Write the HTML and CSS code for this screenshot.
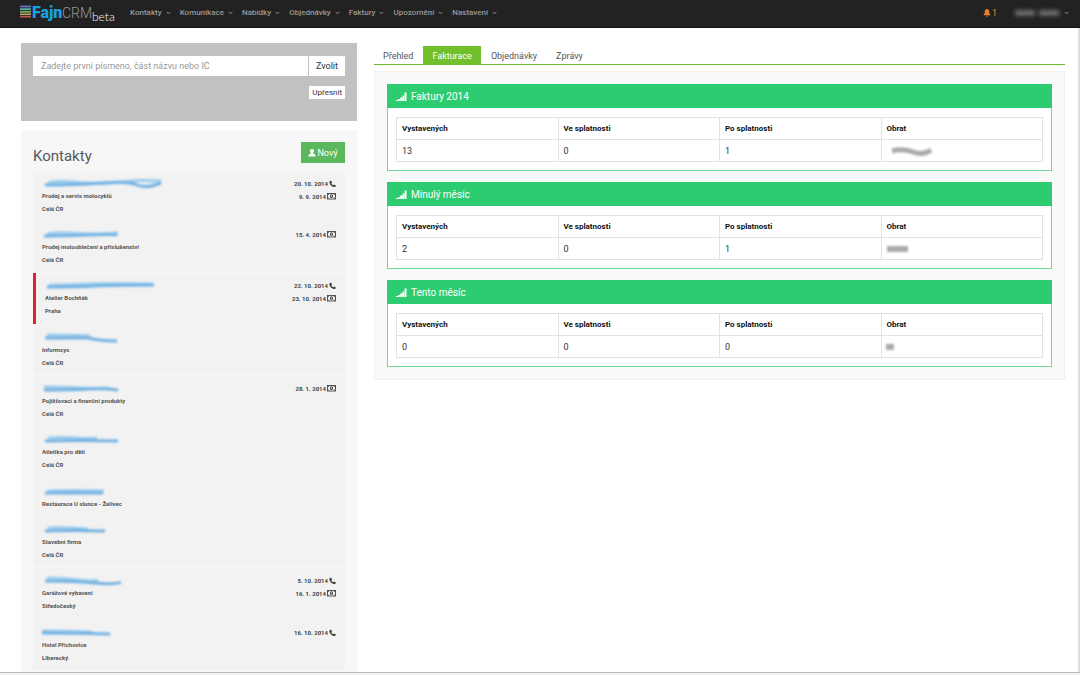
FILE: index.html
```html
<!DOCTYPE html>
<html lang="cs">
<head>
<meta charset="utf-8">
<title>FajnCRM – Fakturace</title>
<link rel="stylesheet" href="styles.css">
</head>
<body>
<svg class="defs" aria-hidden="true">
  <defs>
    <symbol id="chev" viewBox="0 0 6 4"><path d="M.8.6 3 2.9 5.2.6" fill="none" stroke="currentColor" stroke-width="1.1"/></symbol>
    <symbol id="phone" viewBox="0 0 8 8"><path d="M.6.8 2.3.1 3.5 2.4 2.6 3.3C3.1 4.3 3.8 5 4.8 5.4L5.7 4.5 7.9 5.7 7.4 7.2C5.3 8.4-.6 4.8.6.8Z" fill="currentColor"/></symbol>
    <symbol id="money" viewBox="0 0 9 7"><rect x=".5" y=".5" width="8" height="5.5" fill="none" stroke="currentColor" stroke-width=".9"/><ellipse cx="4.5" cy="3.2" rx="1.5" ry="1.9" fill="currentColor"/><path d="M4.5 2.2V4.4" stroke="#f3f3f3" stroke-width=".6"/><path d="M1 1h1.4L1 2.3zM8 1H6.6L8 2.3zM1 5.5h1.4L1 4.2zM8 5.5H6.6L8 4.2z" fill="currentColor"/></symbol>
    <symbol id="signal" viewBox="0 0 11 9"><path d="M0 8h1.9V9H0zM2.1 7H4V9H2.1zM4.2 5.4h2V9h-2zM6.4 3.4h1.9V9H6.4zM8.6 .5h1.9V9H8.6z" fill="currentColor"/></symbol>
  </defs>
</svg>
<div class="app">
  <header class="topbar">
    <a class="logo" href="#" aria-label="FajnCRM beta">
      <svg width="96" height="24" viewBox="0 0 96 24">
        <path d="M0 6.5h11" stroke="#5e79b5" stroke-width="1.8"/>
        <path d="M0 9.2h11" stroke="#58b3a6" stroke-width="1.8"/>
        <path d="M0 11.8h11" stroke="#77ad57" stroke-width="1.8"/>
        <path d="M0 14.3h11" stroke="#c3a668" stroke-width="1.6"/>
        <path d="M0 16.7h11" stroke="#b45a4e" stroke-width="1.6"/>
        <text class="logo-fajn" x="12" y="18">Fajn</text>
        <text class="logo-crm" x="42" y="18">CRM</text>
        <text class="logo-beta" x="72" y="21">beta</text>
      </svg>
    </a>
    <nav class="menu">
      <a href="#">Kontakty<svg><use href="#chev"/></svg></a>
      <a href="#">Komunikace<svg><use href="#chev"/></svg></a>
      <a href="#">Nabídky<svg><use href="#chev"/></svg></a>
      <a href="#">Objednávky<svg><use href="#chev"/></svg></a>
      <a href="#">Faktury<svg><use href="#chev"/></svg></a>
      <a href="#">Upozornění<svg><use href="#chev"/></svg></a>
      <a href="#">Nastavení<svg><use href="#chev"/></svg></a>
    </nav>
    <a class="bell" href="#"><svg width="8" height="8" viewBox="0 0 8 8"><path d="M4 0C5.8.3 6.3 1.6 6.3 3.2 6.3 4.8 7 5.4 7.8 6.3H.2C1 5.4 1.7 4.8 1.7 3.2 1.7 1.6 2.2.3 4 0ZM3 6.7h2C4.9 8.1 3.1 8.1 3 6.7Z" fill="currentColor"/></svg>1</a>
    <a class="user" href="#" aria-label="Uživatel">
      <svg class="name" width="46" height="10" viewBox="0 0 46 10"><path d="M1 5h20M25 5h20" stroke="#777" stroke-width="5"/></svg>
      <svg class="chev"><use href="#chev"/></svg>
    </a>
  </header>

  <main class="content">
    <aside class="side">
      <form class="search">
        <div class="search-row">
          <input type="text" aria-label="Hledat kontakt" placeholder="Zadejte první písmeno, část názvu nebo IČ">
          <button type="button">Zvolit</button>
        </div>
        <button class="refine" type="button">Upřesnit</button>
      </form>
      <section class="contacts">
        <div class="contacts-head">
          <h1>Kontakty</h1>
          <button type="button" class="new"><svg width="8" height="8" viewBox="0 0 8 8"><path d="M4 0C6.6 0 6.2 3.3 5 4.2 5.3 5 7.6 4.8 7.8 7.6H.2C.4 4.8 2.7 5 3 4.2 1.8 3.3 1.4 0 4 0Z" fill="currentColor"/></svg>Nový</button>
        </div>
        <ul class="list">
          <li>
            <div class="who"><svg class="smudge"><path class="a" d="M6 7Q16 4 32 6T66 7 90 5 119 5"/><path class="b" d="M3 9Q34 9 60 7T95 9 119 7"/></svg><span>Prodej a servis motocyklů</span><span>Celá ČR</span></div>
            <div class="dates"><span>20. 10. 2014<svg class="ph"><use href="#phone"/></svg></span><span>9. 9. 2014<svg class="mo"><use href="#money"/></svg></span></div>
          </li>
          <li>
            <div class="who"><svg class="smudge"><path class="a" d="M5 7Q14 5 28 6T52 7 76 6"/><path class="b" d="M2 9Q24 9 46 8T75 8"/></svg><span>Prodej motooblečení a příslušenství</span><span>Celá ČR</span></div>
            <div class="dates"><span>15. 4. 2014<svg class="mo"><use href="#money"/></svg></span></div>
          </li>
          <li class="flagged">
            <div class="who"><svg class="smudge"><path class="a" d="M4 7Q20 7 40 6T107 6"/><path class="b" d="M2 9Q30 9 50 8T109 7"/></svg><span>Atelier Bochňák</span><span>Praha</span></div>
            <div class="dates"><span>22. 10. 2014<svg class="ph"><use href="#phone"/></svg></span><span>23. 10. 2014<svg class="mo"><use href="#money"/></svg></span></div>
          </li>
          <li>
            <div class="who"><svg class="smudge"><path class="a" d="M5 5Q24 5 48 6"/><path class="b" d="M3 8 46 8Q58 11 75 11"/></svg><span>Informsys</span><span>Celá ČR</span></div>
          </li>
          <li>
            <div class="who"><svg class="smudge"><path class="a" d="M2 6Q20 6 38 7T67 7"/><path class="b" d="M2 9Q30 9 46 8T76 9"/></svg><span>Pojišťovací a finanční produkty</span><span>Celá ČR</span></div>
            <div class="dates"><span>28. 1. 2014<svg class="mo"><use href="#money"/></svg></span></div>
          </li>
          <li>
            <div class="who"><svg class="smudge"><path class="a" d="M6 6Q20 5 34 6T55 6"/><path class="b" d="M3 9Q36 8 76 9"/></svg><span>Atletika pro děti</span><span>Celá ČR</span></div>
          </li>
          <li>
            <div class="who"><svg class="smudge"><path class="a" d="M6 7Q28 6 62 7"/><path class="b" d="M3 9 61 9"/></svg><span>Restaurace U slunce - Želivec</span></div>
          </li>
          <li>
            <div class="who"><svg class="smudge"><path class="a" d="M6 6Q22 5 46 7"/><path class="b" d="M3 9Q29 8 63 9"/></svg><span>Stavební firma</span><span>Celá ČR</span></div>
          </li>
          <li>
            <div class="who"><svg class="smudge"><path class="a" d="M5 5Q21 5 36 7T56 7"/><path class="b" d="M3 8Q30 8 52 10T79 9"/></svg><span>Garážové vybavení</span><span>Středočeský</span></div>
            <div class="dates"><span>5. 10. 2014<svg class="ph"><use href="#phone"/></svg></span><span>16. 1. 2014<svg class="mo"><use href="#money"/></svg></span></div>
          </li>
          <li>
            <div class="who"><svg class="smudge"><path class="a" d="M0 6Q19 6 50 7"/><path class="b" d="M0 8Q30 8 68 9"/></svg><span>Hotel Příchovice</span><span>Liberecký</span></div>
            <div class="dates"><span>16. 10. 2014<svg class="ph"><use href="#phone"/></svg></span></div>
          </li>
        </ul>
      </section>
    </aside>

    <section class="detail">
      <nav class="tabs">
        <a href="#">Přehled</a>
        <a href="#" class="active">Fakturace</a>
        <a href="#">Objednávky</a>
        <a href="#">Zprávy</a>
      </nav>
      <div class="pane">
        <article class="card">
          <h2><svg><use href="#signal"/></svg>Faktury 2014</h2>
          <table>
            <thead><tr><th>Vystavených</th><th>Ve splatnosti</th><th>Po splatnosti</th><th>Obrat</th></tr></thead>
            <tbody><tr><td>13</td><td>0</td><td>1</td><td><svg class="hidden-value"><path d="M5 6Q16 3 26 7T44 5" stroke-width="5"/></svg></td></tr></tbody>
          </table>
        </article>
        <article class="card">
          <h2><svg><use href="#signal"/></svg>Minulý měsíc</h2>
          <table>
            <thead><tr><th>Vystavených</th><th>Ve splatnosti</th><th>Po splatnosti</th><th>Obrat</th></tr></thead>
            <tbody><tr><td>2</td><td>0</td><td>1</td><td><svg class="hidden-value"><path d="M0 6H21" stroke-width="6"/></svg></td></tr></tbody>
          </table>
        </article>
        <article class="card">
          <h2><svg><use href="#signal"/></svg>Tento měsíc</h2>
          <table>
            <thead><tr><th>Vystavených</th><th>Ve splatnosti</th><th>Po splatnosti</th><th>Obrat</th></tr></thead>
            <tbody><tr><td>0</td><td>0</td><td>0</td><td><svg class="hidden-value"><path d="M-1 6H7" stroke-width="6"/></svg></td></tr></tbody>
          </table>
        </article>
      </div>
    </section>
  </main>
  <footer class="edge"></footer>
</div>
</body>
</html>
```

FILE: styles.css
```css
* { box-sizing: border-box; }
body {
  margin: 0;
  font: 9px/12px Roboto, "Open Sans", sans-serif;
  color: #333;
  background: #fff;
}
a { color: inherit; text-decoration: none; }
button, input { font: inherit; color: inherit; border: 0; margin: 0; }
svg { flex: none; }
.defs { position: absolute; width: 0; height: 0; }

.app { display: flex; flex-direction: column; height: 100vh; overflow: hidden; }

.topbar {
  display: flex;
  align-items: center;
  flex: none;
  height: 28px;
  padding: 0 11px 1px 20px;
  background: #222;
  border-bottom: 1px solid #111;
  color: #999;
}
.logo { display: flex; align-self: flex-start; margin-right: 14px; }
.logo-fajn { font: 900 16px Roboto, sans-serif; fill: #1a9fe0; }
.logo-crm { font: 300 14px Roboto, sans-serif; fill: #999; }
.logo-beta { font: 300 12px Lato, sans-serif; fill: #fff; }
.menu { display: flex; flex: 1; gap: 9px; font-size: 8px; font-weight: 500; }
.menu a { display: flex; align-items: center; gap: 4px; }
.menu svg, .chev { width: 5px; height: 4px; }
.bell { display: flex; align-items: center; gap: 1px; margin-right: 17px; color: #ee7f2d; }
.user { display: flex; align-items: center; gap: 4px; }
.name { filter: blur(2px); }

.content {
  display: grid;
  grid-template-columns: 336fr 691fr;
  align-items: start;
  gap: 17px;
  flex: 1;
  min-height: 0;
  overflow: hidden;
  padding: 15px 13px 0 21px;
  border-right: 2px solid #ddd;
}
.edge { flex: none; height: 3px; border-top: 1px solid #bbb; background: #f0f0f0; }

.search {
  display: flex;
  flex-direction: column;
  align-items: flex-end;
  gap: 10px;
  height: 78px;
  padding: 13px 12px;
  margin-bottom: 9px;
  background: #c1c1c1;
}
.search-row { display: flex; gap: 1px; width: 100%; height: 20px; }
.search-row input { flex: 1; min-width: 0; padding: 0 8px; background: #fff; }
.search-row input::placeholder { color: #999; opacity: 1; }
.search-row button { width: 36px; padding: 0; background: #fff; }
.refine { height: 13px; padding: 0 3px; background: #fff; font-size: 8px; line-height: 13px; }

.contacts { padding: 12px 12px 6px; background: #f7f7f7; }
.contacts-head { display: flex; justify-content: space-between; height: 29px; }
h1 { margin: 4px 0 0; font-size: 15px; line-height: 20px; font-weight: 400; color: #555a60; }
.new {
  display: flex;
  align-items: center;
  justify-content: center;
  gap: 1px;
  width: 44px;
  height: 21px;
  padding: 0;
  background: #5cb85c;
  color: #fff;
}

.list {
  display: flex;
  flex-direction: column;
  gap: 1px;
  list-style: none;
  margin: 0;
  padding: 0;
  font-size: 6px;
  line-height: 13px;
  font-weight: 700;
  color: #555;
}
.list li {
  display: flex;
  justify-content: space-between;
  padding: 5px 9px 6px;
  background: #f2f2f2;
}
.list li:nth-child(3n) { padding-bottom: 7px; }
.list .flagged { border-left: 3px solid #e0202f; }
.who, .dates { display: flex; flex-direction: column; }
.dates { align-items: flex-end; padding-top: 1px; color: #444; }
.dates span { display: flex; align-items: center; gap: 1px; }
.ph { width: 7px; height: 8px; }
.mo { width: 9px; height: 7px; }
.smudge { width: 124px; height: 13px; fill: none; stroke-linejoin: round; filter: blur(1px); }
.smudge .a { stroke: #9bcbee; stroke-width: 3; }
.smudge .b { stroke: #74b2e2; stroke-width: 3; }

.detail { padding-top: 3px; }
.tabs { display: flex; gap: 1px; border-bottom: 1px solid #6fba2a; color: #555; }
.tabs a { padding: 4px 9px 2px; }
.tabs .active { background: #70bf2b; color: #fff; }
.pane {
  display: flex;
  flex-direction: column;
  gap: 11px;
  margin-top: 6px;
  padding: 12px;
  background: #f9f9f9;
  border: 1px solid #f1f1f1;
}
.card { padding-bottom: 8px; background: #fff; border: 1px solid #6fd99b; border-top: 0; }
h2 {
  display: flex;
  align-items: center;
  gap: 4px;
  height: 24px;
  margin: 0 -1px;
  padding: 1px 9px 0;
  background: #2ecc71;
  color: #fff;
  font-size: 10px;
  line-height: 14px;
  font-weight: 400;
}
h2 svg { width: 11px; height: 9px; }
table { width: calc(100% - 16px); margin: 9px 8px 0; border-collapse: collapse; table-layout: fixed; }
th, td { height: 22px; padding: 0 5px; border: 1px solid #e2e2e2; text-align: left; }
th { color: #111; font-size: 8px; }
.hidden-value { display: block; width: 46px; height: 12px; overflow: visible; filter: blur(1px); }
.hidden-value path { fill: none; stroke: #aaa; }
```
